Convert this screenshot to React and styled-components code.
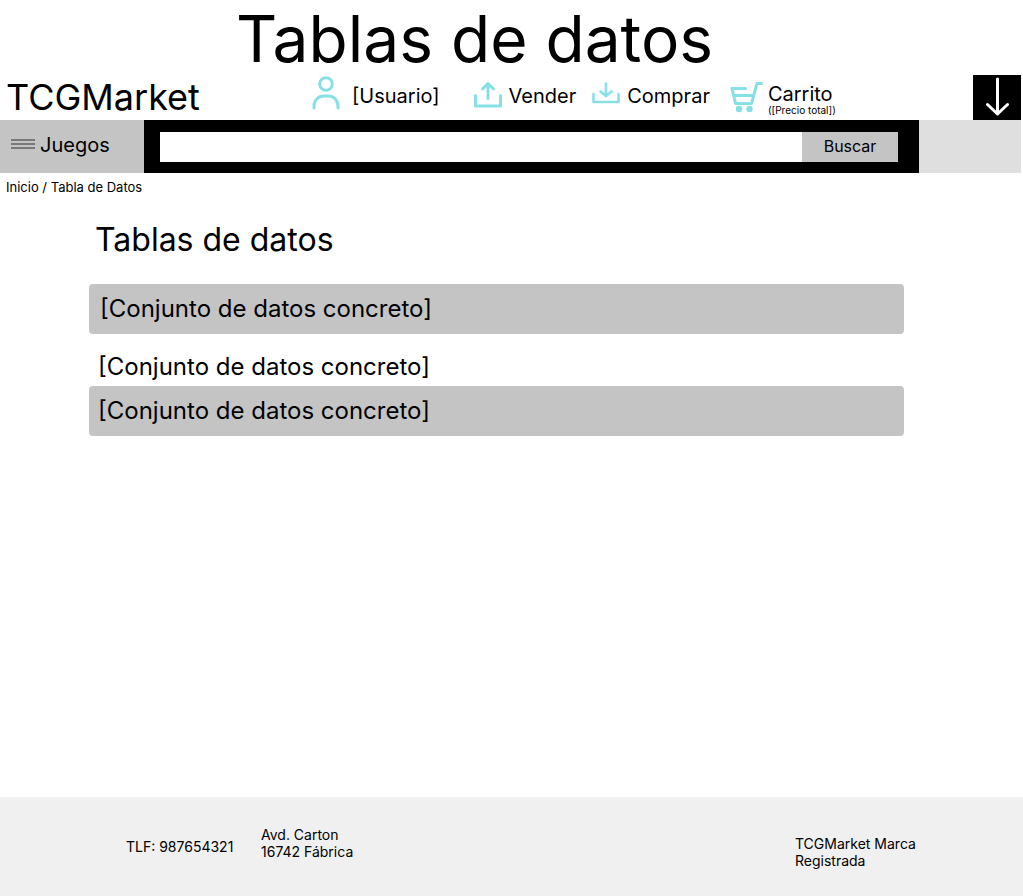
import React from "react";
import styled, { createGlobalStyle } from "styled-components";

const GlobalStyle = createGlobalStyle`
  *, *::before, *::after { box-sizing: border-box; }
  body {
    margin: 0;
    background: #fff;
    color: #000;
    font-family: Inter, "Liberation Sans", sans-serif;
    font-optical-sizing: none;
  }
  a { color: inherit; text-decoration: none; }
  h1, h2, p, ul, ol { margin: 0; padding: 0; font-weight: 400; }
  ul, ol { list-style: none; }
  button, input { font: inherit; color: inherit; border: 0; border-radius: 0; padding: 0; margin: 0; }
  button { cursor: pointer; }
`;

const Page = styled.div`
  min-height: 100vh;
  display: flex;
  flex-direction: column;
`;

const PageTitle = styled.h1`
  height: 75px;
  padding-right: 74px;
  font-size: 64px;
  line-height: 78px;
  text-align: center;
`;

const TopRow = styled.header`
  display: flex;
  height: 45px;
  padding: 0 2px 0 6px;
`;

const Brand = styled.a`
  flex: 0 0 306px;
  font-size: 36px;
  line-height: 44px;
`;

const Nav = styled.nav`
  flex: 1;
  display: flex;
`;

const NavItem = styled.a`
  display: flex;
  align-items: ${(p) => (p.$top ? "flex-start" : "center")};
  gap: ${(p) => p.$gap}px;
  margin-right: ${(p) => p.$after || 0}px;
  height: 42px;
  font-size: 20px;
  line-height: 24px;
  white-space: nowrap;
`;

const Icon = styled.svg`
  display: block;
  flex: none;
  fill: none;
  stroke: ${(p) => p.$color || "#87e0e6"};
  stroke-linecap: round;
  stroke-linejoin: round;
`;

const CartLabel = styled.span`
  display: flex;
  flex-direction: column;
  padding-top: 7px;
`;

const CartTotal = styled.small`
  font-size: 10px;
  line-height: 8px;
`;

const DownButton = styled.button`
  flex: 0 0 48px;
  display: flex;
  justify-content: center;
  background: #000;
`;

const Toolbar = styled.div`
  display: flex;
  height: 53px;
  margin-right: 2px;
  background: #dfdfdf;
`;

const GamesButton = styled.button`
  flex: 0 0 144px;
  display: flex;
  align-items: center;
  gap: 5px;
  padding: 0 0 4px 11px;
  background: #c4c4c4;
  font-size: 20px;
  line-height: 24px;
`;

const SearchForm = styled.form`
  flex: 1;
  display: flex;
  margin-right: 102px;
  padding: 12px 21px 11px 16px;
  background: #000;
`;

const SearchInput = styled.input`
  flex: 1;
  min-width: 0;
  padding: 0 8px;
  background: #fff;
  font-size: 16px;
`;

const SearchButton = styled.button`
  flex: 0 0 96px;
  padding-bottom: 2px;
  background: #c4c4c4;
  font-size: 16px;
  line-height: 20px;
`;

const Breadcrumb = styled.nav`
  padding: 6px 6px 0;
  font-size: 13px;
  line-height: 16px;
`;

const Main = styled.main`
  flex: 1;
  padding: 25px 119px 40px 89px;
`;

const Heading = styled.h2`
  padding-left: 6px;
  font-size: 32px;
  line-height: 40px;
`;

const DataList = styled.ul`
  margin-top: 24px;
`;

const DataRow = styled.li`
  display: flex;
  align-items: ${(p) => (p.$shaded ? "center" : "flex-end")};
  height: ${(p) => (p.$shaded ? 50 : 52)}px;
  padding: ${(p) => (p.$shaded ? "0" : "0 0 4px")};
  padding-left: ${(p) => (p.$first ? 11 : 9)}px;
  border-radius: 4px;
  background: ${(p) => (p.$shaded ? "#c4c4c4" : "transparent")};
  font-size: 24px;
  line-height: 30px;
`;

const Footer = styled.footer`
  display: flex;
  align-items: flex-start;
  min-height: 99px;
  padding: 29px 88px 0 126px;
  background: #f0f0f0;
  font-size: 14px;
  line-height: 17px;
`;

const Phone = styled.p`
  width: 135px;
  padding-top: 12px;
`;

const Address = styled.p`
  flex: 1;
`;

const Legal = styled.p`
  width: 140px;
  padding-top: 9px;
`;

const UserIcon = () => (
  <Icon width="28" height="40" viewBox="0 0 28 40" strokeWidth="3" aria-hidden="true">
    <circle cx="14" cy="8" r="6.3" />
    <path d="M2 32v-2c0-6 4.500-10 10-10h4c5.500 0 10 4 10 10v2" />
  </Icon>
);

const SellIcon = () => (
  <Icon width="28" height="30" viewBox="0 0 28 30" strokeWidth="3" aria-hidden="true">
    <path d="M1.500 14.500V25h25V14.500M14 17.500V2.500M8.500 8L14 2.500l5.500 5.500" />
  </Icon>
);

const BuyIcon = () => (
  <Icon width="28" height="30" viewBox="0 0 28 30" strokeWidth="2.600" aria-hidden="true">
    <path d="M1.500 13v8h25v-8M14 2.500v12M8.500 10.500l5.500 4.500 5.500-4.500" />
  </Icon>
);

const CartIcon = () => (
  <Icon width="34" height="42" viewBox="0 0 34 42" strokeWidth="3" aria-hidden="true">
    <path d="M31.500 8.500h-4.500l-5.500 20H5.500L2 13.500h13.500M4 20.500h19" />
    <circle cx="9" cy="34" r="3.200" fill="#87e0e6" stroke="none" />
    <circle cx="19.500" cy="34" r="3.200" fill="#87e0e6" stroke="none" />
  </Icon>
);

const DownIcon = () => (
  <Icon $color="#fff" width="24" height="45" viewBox="0 0 24 45" strokeWidth="3" aria-hidden="true">
    <path d="M12.500 4v35M2.500 29.500l10 9.500 10-9.500" />
  </Icon>
);

const MenuIcon = () => (
  <Icon $color="#606060" width="24" height="12" viewBox="0 0 24 12" strokeWidth="1.500" aria-hidden="true">
    <path d="M0 1h24M0 5h24M0 9h24" strokeLinecap="butt" />
  </Icon>
);

const rows = [
  { id: 1, shaded: true },
  { id: 2, shaded: false },
  { id: 3, shaded: true },
];

export default function App() {
  return (
    <>
      <GlobalStyle />
      <Page>
        <PageTitle>Tablas de datos</PageTitle>
        <TopRow>
          <Brand href="#">TCGMarket</Brand>
          <Nav aria-label="Principal">
            <NavItem href="#usuario" $gap={12} $after={34}>
              <UserIcon />
              [Usuario]
            </NavItem>
            <NavItem href="#vender" $gap={7} $after={16}>
              <SellIcon />
              Vender
            </NavItem>
            <NavItem href="#comprar" $gap={7} $after={20}>
              <BuyIcon />
              Comprar
            </NavItem>
            <NavItem href="#carrito" $gap={4} $top>
              <CartIcon />
              <CartLabel>
                Carrito
                <CartTotal>([Precio total])</CartTotal>
              </CartLabel>
            </NavItem>
          </Nav>
          <DownButton type="button" aria-label="Bajar">
            <DownIcon />
          </DownButton>
        </TopRow>
        <Toolbar>
          <GamesButton type="button">
            <MenuIcon />
            Juegos
          </GamesButton>
          <SearchForm role="search" onSubmit={(e) => e.preventDefault()}>
            <SearchInput type="text" aria-label="Buscar" />
            <SearchButton type="submit">Buscar</SearchButton>
          </SearchForm>
        </Toolbar>
        <Breadcrumb aria-label="Ruta">
          <a href="#inicio">Inicio</a> / <a href="#tabla">Tabla de Datos</a>
        </Breadcrumb>
        <Main>
          <Heading>Tablas de datos</Heading>
          <DataList>
            {rows.map((row, i) => (
              <DataRow key={row.id} $shaded={row.shaded} $first={i === 0}>
                <a href={`#conjunto-${row.id}`}>[Conjunto de datos concreto]</a>
              </DataRow>
            ))}
          </DataList>
        </Main>
        <Footer>
          <Phone>TLF: 987654321</Phone>
          <Address>
            Avd. Carton
            <br />
            16742 Fábrica
          </Address>
          <Legal>TCGMarket Marca Registrada</Legal>
        </Footer>
      </Page>
    </>
  );
}
